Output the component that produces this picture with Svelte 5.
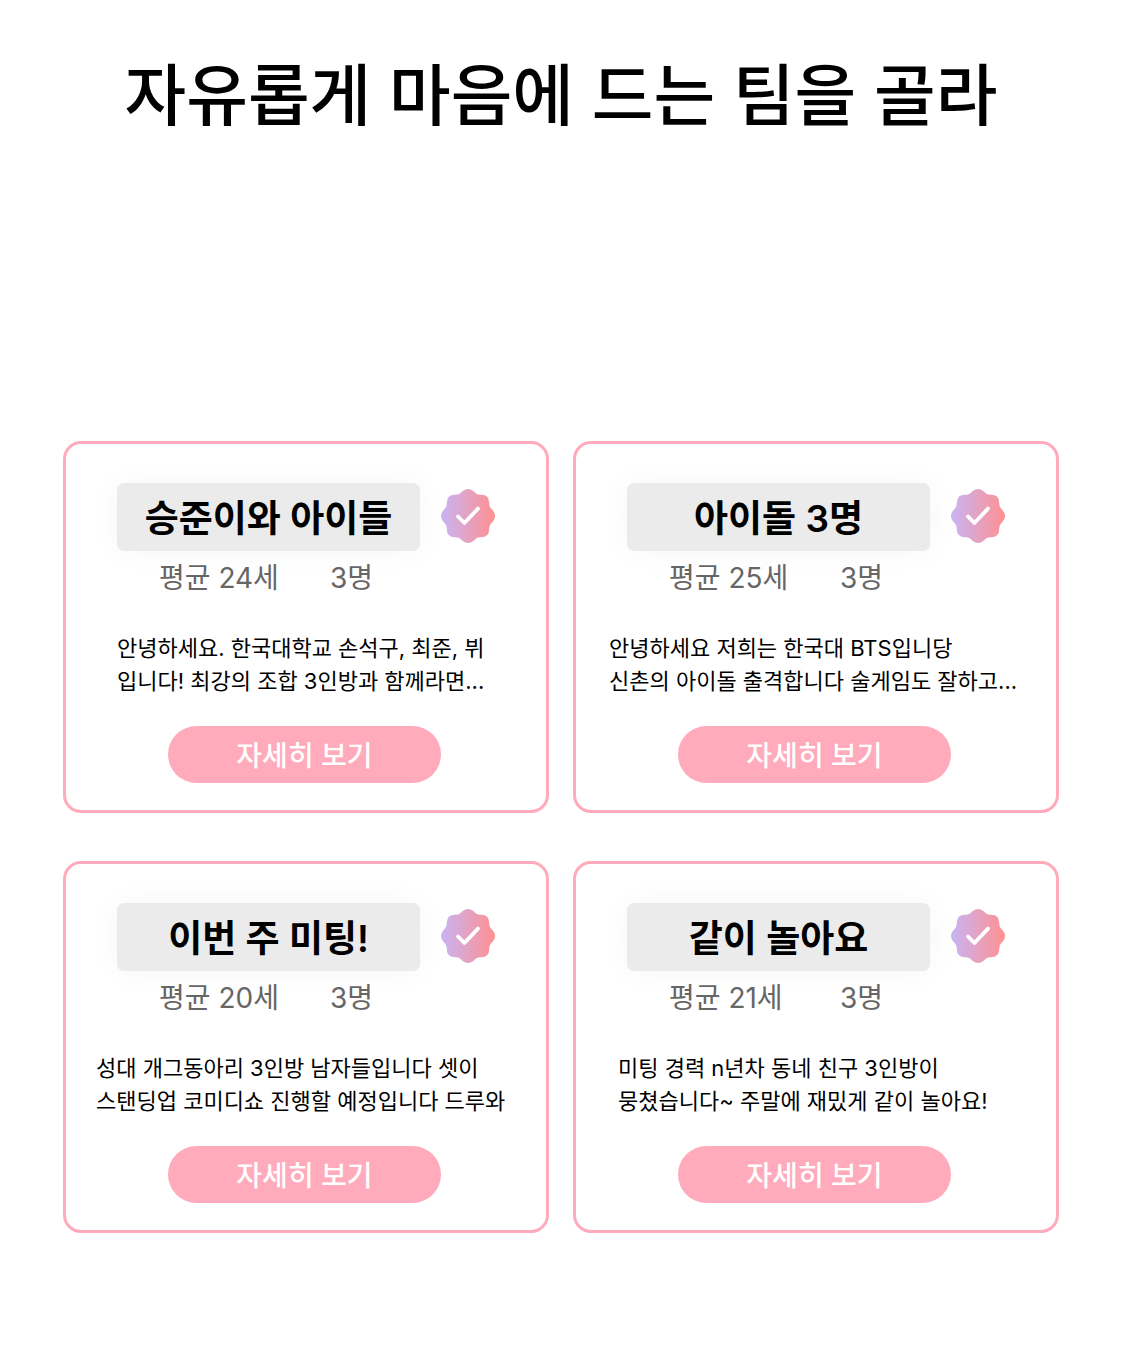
<script>
  const teams = [
    { name: '승준이와 아이들', age: 24, inset: 51, lines: ['안녕하세요. 한국대학교 손석구, 최준, 뷔', '입니다! 최강의 조합 3인방과 함께라면...'] },
    { name: '아이돌 3명', age: 25, inset: 33, lines: ['안녕하세요 저희는 한국대 BTS입니당', '신촌의 아이돌 출격합니다 술게임도 잘하고...'] },
    { name: '이번 주 미팅!', age: 20, inset: 30, lines: ['성대 개그동아리 3인방 남자들입니다 셋이', '스탠딩업 코미디쇼 진행할 예정입니다 드루와'] },
    { name: '같이 놀아요', age: 21, inset: 42, lines: ['미팅 경력 n년차 동네 친구 3인방이', '뭉쳤습니다~ 주말에 재밌게 같이 놀아요!'] }
  ];
</script>

<main>
  <h1>자유롭게 마음에 드는 팀을 골라</h1>
  <section class="grid">
    {#each teams as team, i}
      <article class="card">
        <header>
          <h2>{team.name}</h2>
          <svg class="badge" viewBox="0 0 54 54" aria-hidden="true">
            <defs>
              <linearGradient id="seal{i}" x1="0" y1="0" x2="1" y2="0">
                <stop offset="0" stop-color="#c8b4f4" />
                <stop offset="1" stop-color="#ff9090" />
              </linearGradient>
            </defs>
            <path
              fill="url(#seal{i})"
              d="M22 1.8Q27-1.8 32 1.8L35 4.4Q37 5.8 40 5.8Q48.2 5.8 48.2 14Q48.2 17 49.6 19L52.2 22Q55.8 27 52.2 32L49.6 35Q48.2 37 48.2 40Q48.2 48.2 40 48.2Q37 48.2 35 49.6L32 52.2Q27 55.8 22 52.2L19 49.6Q17 48.2 14 48.2Q5.8 48.2 5.8 40Q5.8 37 4.4 35L1.8 32Q-1.8 27 1.8 22L4.4 19Q5.8 17 5.8 14Q5.8 5.8 14 5.8Q17 5.8 19 4.4Z"
            />
            <path d="M17 27.5L23.4 34L37 19.6" fill="none" stroke="#fff" stroke-width="3.8" stroke-linecap="round" stroke-linejoin="round" />
          </svg>
        </header>
        <div class="meta"><span class="age">평균 {team.age}세</span><span>3명</span></div>
        <p style:padding-left="{team.inset}px">{team.lines[0]}<br />{team.lines[1]}</p>
        <button type="button">자세히 보기</button>
      </article>
    {/each}
  </section>
</main>

<style>
  :global(body) {
    background: #fff;
  }
  main {
    padding: 48px 66px 120px 63px;
    font-family: Inter, "Noto Sans CJK KR", sans-serif;
    color: #000;
  }
  h1 {
    margin: 0 0 297px;
    font-size: 67px;
    line-height: 96px;
    font-weight: 500;
    text-align: center;
    white-space: nowrap;
  }
  .grid {
    display: grid;
    grid-template-columns: 1fr 1fr;
    gap: 48px 24px;
  }
  .card {
    box-sizing: border-box;
    display: flex;
    flex-direction: column;
    align-items: center;
    padding: 39px 0 27px;
    border: 3px solid #ffabbb;
    border-radius: 18px;
  }
  header {
    display: flex;
    align-items: flex-start;
    gap: 21px;
  }
  h2 {
    box-sizing: border-box;
    margin: 0;
    width: 303px;
    height: 68px;
    padding-top: 2px;
    font-size: 37px;
    line-height: 68px;
    font-weight: 600;
    text-align: center;
    white-space: nowrap;
    background: #ebebeb;
    border-radius: 7px;
    box-shadow: 0 0 30px rgba(60, 0, 0, 0.04);
  }
  .badge {
    width: 54px;
    height: 54px;
    margin-top: 6px;
  }
  .meta {
    display: flex;
    width: 294px;
    margin-top: 7px;
    font-size: 28px;
    line-height: 40px;
    color: #666;
  }
  .age {
    width: 171px;
  }
  p {
    align-self: flex-start;
    margin: 34px 0 28px;
    font-size: 22px;
    line-height: 33px;
    white-space: nowrap;
  }
  button {
    width: 273px;
    height: 57px;
    margin-right: 3px;
    padding: 3px 0 0;
    border: 0;
    border-radius: 29px;
    background: #ffabbb;
    color: #fff;
    font: 500 28px/54px Inter, "Noto Sans CJK KR", sans-serif;
  }
</style>
